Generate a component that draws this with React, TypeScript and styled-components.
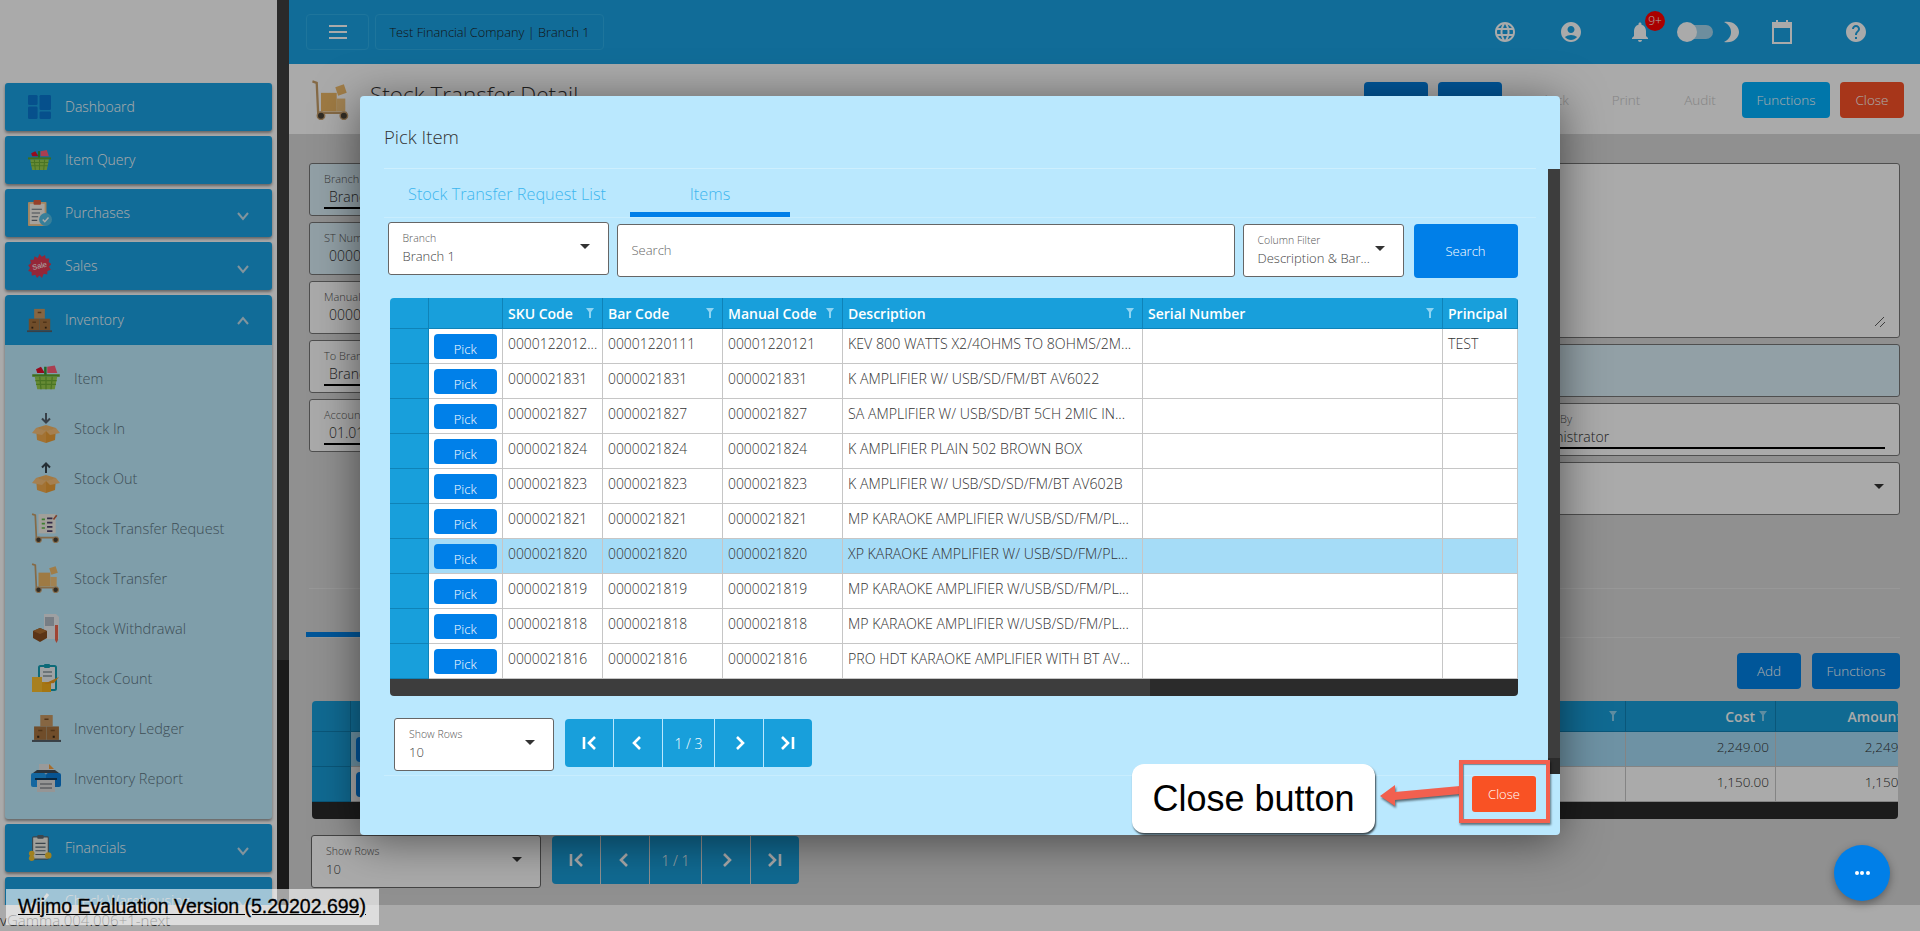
import React from "react";
import styled, { createGlobalStyle } from "styled-components";
import { MdAccountCircle, MdHelp, MdLanguage, MdNotifications } from "react-icons/md";

const Global = createGlobalStyle`
    html, body { margin: 0; padding: 0; width: 100%; height: 100%; overflow: hidden; }
    body { background: #fff; font-family: "Open Sans", "Liberation Sans", sans-serif; font-weight: 300; color: #333; }
    * { box-sizing: border-box; }
`;

/* ---------- icons ---------- */
const Basket = ({ size = 24 }: { size?: number }) => (
    <svg width={size} height={size} viewBox="0 0 24 24">
        <path d="M4 5l4-2 3 5H5z" fill="#e0102c" />
        <path d="M13 3l6-1 2 6h-8z" fill="#ff5d7a" />
        <path d="M10.500 3h2v7h-2z" fill="#2f9a3b" />
        <path d="M1 9h22v2H1z" fill="#5fa52b" />
        <path d="M3 11h18l-2 10H5z" fill="#9ad04f" />
        <path d="M3.500 14h17M4 17h16M7 11l1 10M12 11v10M17 11l-1 10" stroke="#6fae36" strokeWidth="1" fill="none" />
    </svg>
);

const Tiles = () => (
    <svg width={23} height={24} viewBox="0 0 24 29" preserveAspectRatio="none">
        <rect x="0" y="0" width="10" height="12" rx="1.500" fill="#0a78d2" />
        <rect x="0" y="14" width="10" height="15" rx="1.500" fill="#0a78d2" />
        <rect x="12" y="0" width="12" height="18" rx="1.500" fill="#0a78d2" />
        <rect x="12" y="20" width="12" height="9" rx="1.500" fill="#0a78d2" />
    </svg>
);

const Clipboard = () => (
    <svg width={24} height={26} viewBox="0 0 26 28">
        <rect x="0" y="2" width="20" height="26" rx="1" fill="#f3c892" />
        <rect x="2" y="4" width="16" height="22" fill="#f8f4ec" />
        <rect x="6" y="0" width="8" height="5" rx="1" fill="#e0603f" />
        <path d="M4 10h11M4 14h9M4 18h7M4 22h6" stroke="#66707a" strokeWidth="1.200" />
        <circle cx="19" cy="21" r="7" fill="#53bfe8" />
        <path d="M16 21l2.200 2.400 4-4.400" stroke="#fff" strokeWidth="1.600" fill="none" />
    </svg>
);

const SaleBadge = () => (
    <svg width={23} height={24} viewBox="0 0 24 26">
        <path d="M12 0l2.500 3 3.500-1.800.8 3.800 3.900-.1-.8 3.900 3 2.200-2.600 2.800 2 3.300-3.700 1.200-.2 3.900-3.800-.9L14.700 26 12 23.200 9.300 26l-1.900-3.400-3.800.9-.2-3.900L-.3 18.400l2-3.300L-.3 12.300l3-2.200L1.900 6.200l3.900.1.800-3.800 3.500 1.800z" fill="#e03a54" />
        <text x="12" y="15.500" textAnchor="middle" fontSize="8" fill="#fff" transform="rotate(-14 12 13)" fontFamily="Liberation Sans, sans-serif">Sale</text>
    </svg>
);

const Boxes = ({ size = 28 }: { size?: number }) => (
    <svg width={size} height={size} viewBox="0 0 28 28">
        <rect x="8" y="1" width="12" height="11" fill="#c99a64" />
        <rect x="2" y="12" width="12" height="13" fill="#a8743f" />
        <rect x="14" y="12" width="12" height="13" fill="#a8743f" />
        <path d="M12 5h4M6 16h4M18 16h4" stroke="#7a4f25" strokeWidth="1.500" />
        <rect x="5" y="21" width="2" height="2" fill="#3a2a18" />
        <rect x="20" y="21" width="2" height="2" fill="#3a2a18" />
        <rect x="0" y="25" width="28" height="2" fill="#56606a" />
    </svg>
);

const OpenBox = ({ dir }: { dir: "in" | "out" }) => (
    <svg width={28} height={32} viewBox="0 0 28 32">
        {dir === "in" ? (
            <path d="M14 1v9M10 6.500l4 4 4-4" stroke="#54616c" strokeWidth="2" fill="none" />
        ) : (
            <path d="M14 11V2M10 5.500l4-4 4 4" stroke="#37454f" strokeWidth="2" fill="none" />
        )}
        <path d="M14 13l10 3-10 3-10-3z" fill="#f7b764" />
        <path d="M4 16l10 3v12l-9-3z" fill="#f4ab4d" />
        <path d="M24 16l-10 3v12l9-3z" fill="#eda037" />
        <path d="M4 16L0 21l10 2 4-4zM24 16l4 5-10 2-4-4z" fill="#f9c179" />
    </svg>
);

const Cart = ({ size = 28, list }: { size?: number; list?: boolean }) => (
    <svg width={size} height={size} viewBox="0 0 28 28">
        <path d="M1 1l3 1 1 21h20" stroke="#c89f6a" strokeWidth="1.600" fill="none" />
        {list ? (
            <>
                <rect x="7" y="1" width="16" height="18" fill="#f4f1e8" />
                <path d="M10 6h3M10 10h3M10 14h3" stroke="#5fbf4a" strokeWidth="1.600" />
                <path d="M15 5h5M15 9h5M15 13h5M15 17h5" stroke="#4b3f6a" strokeWidth="1.600" />
                <path d="M24 2l-3 4" stroke="#c0603f" strokeWidth="1.500" />
            </>
        ) : (
            <>
                <rect x="7" y="9" width="11" height="13" fill="#eeb765" />
                <rect x="18" y="13" width="6" height="9" fill="#f2c47c" />
                <path d="M17 5l6-2 2 6-6 2z" fill="#f0bc6c" />
            </>
        )}
        <circle cx="7" cy="25" r="2.600" fill="#4a4236" stroke="#c9a271" strokeWidth="1" />
        <circle cx="23" cy="25" r="2.600" fill="#4a4236" stroke="#c9a271" strokeWidth="1" />
    </svg>
);

const Withdrawal = () => (
    <svg width={28} height={30} viewBox="0 0 28 30">
        <path d="M12 1h12l3 3v22H12z" fill="#eef1f4" />
        <path d="M13 4h9v9h-9z" fill="#b3bcc6" />
        <path d="M23 12h3v15l-1.500 3-1.500-3z" fill="#f0664f" />
        <path d="M1 18l7-3 7 3v7l-7 4-7-4z" fill="#8a4f22" />
        <path d="M1 18l7 3 7-3-7-3z" fill="#b06f34" />
    </svg>
);

const CountIcon = () => (
    <svg width={28} height={28} viewBox="0 0 28 28">
        <rect x="7" y="2" width="17" height="24" rx="1.500" fill="#eef4f6" stroke="#12a0b4" strokeWidth="2" />
        <rect x="12" y="0" width="6" height="4" rx="1" fill="#12a0b4" />
        <path d="M11 8h9M11 12h9" stroke="#8b97a0" strokeWidth="1.500" />
        <rect x="0" y="13" width="10" height="15" fill="#fdc02f" />
        <rect x="10" y="18" width="9" height="10" fill="#f8b21c" />
        <path d="M12 20l15-7-5 6z" fill="#f19a1d" />
    </svg>
);

const Printer = () => (
    <svg width={30} height={28} viewBox="0 0 30 28">
        <path d="M8 0h10l5 5v8H8z" fill="#e7e7e7" />
        <path d="M18 0l5 5h-5z" fill="#f5a341" />
        <path d="M2 9l4-3h18l4 3z" fill="#3f4d59" />
        <rect x="0" y="9" width="15" height="14" rx="2" fill="#1f9bf0" />
        <rect x="15" y="9" width="15" height="14" rx="2" fill="#0b7fdc" />
        <rect x="4" y="14" width="22" height="2" fill="#0f3c60" />
        <rect x="6" y="16" width="18" height="12" fill="#e0e0e0" />
        <path d="M9 20h12M9 24h12" stroke="#8a8f94" strokeWidth="1.500" />
    </svg>
);

const Ledger = () => (
    <svg width={24} height={26} viewBox="0 0 26 28">
        <rect x="5" y="2" width="17" height="24" rx="1" fill="#f2f2ea" stroke="#5a6a74" strokeWidth="1.200" />
        <rect x="10" y="0" width="7" height="4" rx="1" fill="#5a6a74" />
        <path d="M8 9h11M8 13h11M8 17h11M8 21h11" stroke="#5a6a74" strokeWidth="1.200" />
        <circle cx="4" cy="20" r="3" fill="#f1c232" />
        <circle cx="4" cy="25" r="3" fill="#f1c232" />
        <circle cx="22" cy="22" r="3.500" fill="#f1c232" />
    </svg>
);

const Warehouse = () => (
    <svg width={24} height={24} viewBox="0 0 24 24">
        <path d="M4 14l5 5L20 5" stroke="#fff" strokeWidth="3" fill="none" />
    </svg>
);

const Chevron = ({ up }: { up?: boolean }) => (
    <svg width={12} height={9} viewBox="0 0 12 9">
        <path d={up ? "M1 8l5-6 5 6" : "M1 1l5 6 5-6"} stroke="#c4dfec" strokeWidth="2" fill="none" />
    </svg>
);

const Funnel = () => (
    <svg width={8} height={10} viewBox="0 0 8 10">
        <path d="M0 0h8L5 4v6H3V4z" fill="#8ed4f2" />
    </svg>
);

const PageGlyph = ({ kind }: { kind: "first" | "prev" | "next" | "last" }) => {
    const d = {
        first: "M3 2v12M14 2L8 8l6 6",
        prev: "M10 2L4 8l6 6",
        next: "M6 2l6 6-6 6",
        last: "M13 2v12M2 2l6 6-6 6",
    }[kind];
    return (
        <svg width={16} height={16} viewBox="0 0 16 16">
            <path d={d} stroke="#fff" strokeWidth="2.600" fill="none" />
        </svg>
    );
};

/* ---------- page frame ---------- */
const Page = styled.div`
    width: 1920px;
    height: 931px;
    display: flex;
    flex-direction: column;
    overflow: hidden;
    position: relative;
`;

const Body = styled.div`
    flex: 0 0 905px;
    display: flex;
    min-height: 0;
`;

const Footer = styled.div`
    flex: 1;
    background: #fff;
    font-size: 15px;
    line-height: 20px;
    padding-top: 5px;
    color: #222;
`;

const Sidebar = styled.nav`
    width: 277px;
    flex: none;
    padding: 83px 5px 0;
    display: flex;
    flex-direction: column;
    gap: 5px;
    overflow: hidden;
`;

const NavRow = styled.div<{ $open?: boolean }>`
    flex: none;
    height: ${(p) => (p.$open ? 50 : 48)}px;
    background: #1aa3e5;
    border-radius: ${(p) => (p.$open ? "4px 4px 0 0" : "3px")};
    box-shadow: 0 2px 3px rgba(0, 0, 0, 0.4);
    display: flex;
    align-items: center;
    color: #fff;
    font-size: 14px;
    margin-bottom: ${(p) => (p.$open ? -5 : 0)}px;
`;

const NavIcon = styled.span`
    width: 60px;
    flex: none;
    display: flex;
    justify-content: center;
    padding-left: 11px;
    padding-right: 2px;
`;

const NavLabel = styled.span`
    flex: 1;
    padding-bottom: 2px;
`;

const NavArrow = styled.span<{ $up?: boolean }>`
    width: 50px;
    flex: none;
    display: flex;
    padding-left: 15px;
    padding-top: ${(p) => (p.$up ? 0 : 6)}px;
`;

const SubPanel = styled.div`
    flex: none;
    height: 474px;
    padding-top: 8px;
    background: #bfedff;
    border-radius: 0 0 3px 3px;
    box-shadow: 0 2px 3px rgba(0, 0, 0, 0.4);
`;

const SubRow = styled.div`
    height: 50px;
    display: flex;
    align-items: center;
    color: #5c7684;
    font-size: 14.500px;
`;

const SubIcon = styled.span`
    width: 69px;
    flex: none;
    display: flex;
    justify-content: center;
    padding-left: 15px;
    padding-right: 2px;
`;

const ScrollTrack = styled.div`
    width: 12px;
    flex: none;
    display: flex;
    flex-direction: column;
    background: #272727;
`;

const ScrollThumb = styled.div`
    height: 660px;
    background: #3f3f3f;
`;

const Main = styled.main`
    flex: 1;
    min-width: 0;
    display: flex;
    flex-direction: column;
    background: #d9d9d9;
`;

const TopBar = styled.header`
    flex: 0 0 64px;
    background: #1aa3e5;
    display: flex;
    align-items: center;
    padding-left: 17px;
    gap: 6px;
`;

const BarBox = styled.div<{ $w: number }>`
    width: ${(p) => p.$w}px;
    flex: none;
    height: 36px;
    border: 1px solid #2db0ea;
    border-radius: 4px;
    display: flex;
    align-items: center;
    justify-content: center;
    font-size: 12.800px;
    color: #1c1c1c;
`;

const TopIcons = styled.div`
    margin-left: auto;
    padding-right: 52px;
    display: flex;
    align-items: center;
    color: #fff;
`;

const TopSlot = styled.span<{ $ml: number }>`
    margin-left: ${(p) => p.$ml}px;
    display: flex;
    position: relative;
`;

const Badge = styled.span`
    position: absolute;
    left: 17px;
    top: -9px;
    width: 20px;
    height: 20px;
    border-radius: 50%;
    background: #f00;
    color: #fff;
    font-size: 12px;
    line-height: 20px;
    text-align: center;
`;

const Toggle = styled.span`
    width: 36px;
    height: 20px;
    display: flex;
    align-items: center;
    position: relative;
    &::before {
        content: "";
        position: absolute;
        left: 6px;
        right: 0;
        height: 14px;
        border-radius: 7px;
        background: #a5d6ee;
    }
    &::after {
        content: "";
        position: absolute;
        left: 0;
        width: 20px;
        height: 20px;
        border-radius: 50%;
        background: #fff;
    }
`;

const PageHead = styled.div`
    flex: 0 0 70px;
    background: #fff;
    display: flex;
    align-items: flex-start;
    padding: 16px 16px 0 22px;
`;

const PageTitle = styled.h1`
    margin: 0 0 0 19px;
    font-size: 22.500px;
    line-height: 30px;
    font-weight: 300;
    color: #333;
`;

const HeadActions = styled.div`
    margin-left: auto;
    padding-top: 2px;
    display: flex;
    gap: 10px;
`;

const ActionBtn = styled.button<{ $tone?: "blue" | "sky" | "red" | "off"; $w?: number }>`
    width: ${(p) => p.$w ?? 64}px;
    height: 36px;
    border: 0;
    border-radius: 4px;
    padding: 0;
    font: inherit;
    font-size: 13.500px;
    color: ${(p) => (p.$tone === "off" ? "#c8c8c8" : "#fff")};
    background: ${(p) =>
        p.$tone === "sky" ? "#00b2ff" : p.$tone === "red" ? "#fb5127" : p.$tone === "off" ? "transparent" : "#0081e6"};
`;

const Content = styled.div`
    flex: 1;
    min-height: 0;
    padding: 29px 20px 0;
    display: flex;
    flex-direction: column;
`;

const FormGrid = styled.div`
    flex: 0 0 351px;
    display: flex;
    gap: 11px;
`;

const FormCol = styled.div<{ $w?: number }>`
    ${(p) => (p.$w ? `width: ${p.$w}px; flex: none;` : "flex: 1;")}
    display: flex;
    flex-direction: column;
    gap: 6px;
`;

const FormField = styled.div<{ $tint?: boolean; $h?: number }>`
    height: ${(p) => p.$h ?? 53}px;
    flex: none;
    border: 1px solid #777;
    border-radius: 3px;
    background: ${(p) => (p.$tint ? "#dcf0fa" : "#fff")};
    padding: 7px 14px 0;
    position: relative;
`;

const FieldLabel = styled.div`
    font-size: 11px;
    line-height: 15px;
    color: #555;
`;

const FieldValue = styled.div<{ $line?: boolean }>`
    font-size: 14px;
    line-height: 19px;
    color: #333;
    padding: 1px 0 1px 5px;
    border-bottom: ${(p) => (p.$line ? "2px solid #000" : "0")};
`;

const Resize = styled.svg`
    position: absolute;
    right: 14px;
    bottom: 10px;
`;

const TabRule = styled.div<{ $top: number }>`
    margin-top: ${(p) => p.$top}px;
    height: 1px;
    flex: none;
    background: #e4e4e4;
`;

const TabMark = styled.div`
    flex: none;
    margin: 43px 0 0 -3px;
    width: 180px;
    height: 5px;
    background: #0081e6;
`;

const GridTools = styled.div`
    flex: none;
    margin-top: 15px;
    display: flex;
    justify-content: flex-end;
    gap: 11px;
`;

const Grid = styled.div<{ $cols: string; $w: number; $top?: number; $left?: number }>`
    flex: none;
    width: ${(p) => p.$w}px;
    display: grid;
    grid-template-columns: ${(p) => p.$cols};
    grid-template-rows: 31px;
    grid-auto-rows: 35px;
    margin-top: ${(p) => p.$top ?? 0}px;
    margin-left: ${(p) => p.$left ?? 0}px;
    border-radius: 4px 4px 0 0;
    overflow: hidden;
`;

const HeadCell = styled.div<{ $right?: boolean; $inset?: number }>`
    background: #189fdb;
    border-right: 1px solid #0f83b8;
    border-bottom: 1px solid #0f83b8;
    color: #fff;
    font-size: 14px;
    font-weight: 600;
    display: flex;
    align-items: center;
    justify-content: ${(p) => (p.$right ? "flex-end" : "space-between")};
    gap: 4px;
    padding: 0 ${(p) => p.$inset ?? 8}px 0 5px;
    white-space: nowrap;
    overflow: hidden;
    &:last-child { border-right: 0; }
`;

const RowHead = styled.div`
    background: #189fdb;
    border-right: 1px solid #0f83b8;
    border-bottom: 1px solid #0f83b8;
`;

const Cell = styled.div<{ $on?: boolean; $right?: boolean; $size?: number }>`
    background: ${(p) => (p.$on ? "#a5dcf7" : "#fff")};
    border-right: 1px solid #c6c6c6;
    border-bottom: 1px solid #c6c6c6;
    color: #333;
    font-size: ${(p) => p.$size ?? 13.5}px;
    line-height: 30px;
    padding: 0 6px 0 5px;
    white-space: nowrap;
    overflow: hidden;
    text-align: ${(p) => (p.$right ? "right" : "left")};
`;

const PickCell = styled(Cell)`
    padding: 5px;
    display: flex;
`;

const PickBtn = styled.button`
    width: 64px;
    height: 25px;
    border: 0;
    border-radius: 4px;
    padding: 0;
    background: #0080e9;
    color: #fff;
    font: inherit;
    font-size: 13px;
`;

const HScroll = styled.div<{ $thumb: number; $w: number; $left: number }>`
    flex: none;
    height: 17px;
    width: ${(p) => p.$w}px;
    margin-left: ${(p) => p.$left}px;
    border-radius: 0 0 4px 4px;
    background: linear-gradient(to right, #3d3d3d ${(p) => p.$thumb}px, #2b2b2b ${(p) => p.$thumb}px);
`;

const PagerRow = styled.div<{ $top: number; $left: number }>`
    flex: none;
    display: flex;
    align-items: flex-start;
    gap: 11px;
    margin-top: ${(p) => p.$top}px;
    margin-left: ${(p) => p.$left}px;
`;

const SelectBox = styled.div<{ $w: number; $top?: number }>`
    width: ${(p) => p.$w}px;
    height: 53px;
    flex: none;
    margin-top: ${(p) => p.$top ?? 0}px;
    background: #fff;
    border: 1px solid #666;
    border-radius: 3px;
    padding: 8px 14px 0;
    position: relative;
`;

const SelectLabel = styled.div`
    font-size: 10.500px;
    line-height: 15px;
    color: #555;
`;

const SelectValue = styled.div`
    font-size: 13px;
    line-height: 20px;
    color: #444;
    white-space: nowrap;
`;

const Caret = styled.i<{ $right?: number }>`
    position: absolute;
    right: ${(p) => p.$right ?? 18}px;
    top: 21px;
    border-left: 5px solid transparent;
    border-right: 5px solid transparent;
    border-top: 5px solid #333;
`;

const Pager = styled.div`
    display: flex;
    margin-top: 1px;
    border-radius: 4px;
    overflow: hidden;
    gap: 1px;
`;

const PagerCell = styled.div<{ $w?: number }>`
    width: ${(p) => p.$w ?? 48}px;
    height: 48px;
    background: #189fdb;
    color: #fff;
    font-size: 14px;
    display: flex;
    align-items: center;
    justify-content: center;
`;

/* ---------- modal ---------- */
const Backdrop = styled.div`
    position: absolute;
    inset: 0;
    background: rgba(0, 0, 0, 0.333);
    z-index: 10;
`;

const Modal = styled.section`
    position: absolute;
    left: 360px;
    top: 96px;
    width: 1200px;
    height: 739px;
    background: #bae8fe;
    border-radius: 4px;
    box-shadow: 0 6px 45px rgba(0, 0, 0, 0.5);
    z-index: 11;
    display: flex;
    flex-direction: column;
`;

const ModalHead = styled.div`
    flex: 0 0 73px;
    margin: 0 24px;
    padding-top: 26px;
    border-bottom: 1px solid #cdeffe;
    font-size: 18.500px;
    line-height: 30px;
    color: #333;
`;

const TabBar = styled.div`
    flex: 0 0 48px;
    margin: 0 24px;
    display: flex;
    border-bottom: 1px solid #c8edfe;
`;

const Tab = styled.div<{ $w: number; $on?: boolean }>`
    width: ${(p) => p.$w}px;
    height: 48px;
    text-align: center;
    font-size: 16.300px;
    line-height: 50px;
    color: #3db6ee;
    border-bottom: ${(p) => (p.$on ? "5px solid #007fe8" : "0")};
`;

const FilterRow = styled.div`
    flex: none;
    margin: 4px 0 0 27.500px;
    display: flex;
    align-items: flex-start;
    gap: 8px;
`;

const SearchBox = styled.div`
    width: 618px;
    height: 53px;
    margin-top: 2px;
    background: #fff;
    border: 1px solid #666;
    border-radius: 3px;
    padding-left: 14px;
    font-size: 13px;
    line-height: 50px;
    color: #666;
`;

const SearchBtn = styled.button`
    width: 104px;
    height: 54px;
    margin: 2px 0 0 2px;
    border: 0;
    border-radius: 4px;
    background: #007fe8;
    color: #fff;
    font: inherit;
    font-size: 13px;
`;

const ModalFoot = styled.div`
    margin: 4px 24px 0;
    flex: 1;
    border-top: 1px solid #c8edfe;
    display: flex;
    justify-content: flex-end;
    align-items: flex-start;
`;

const CloseBtn = styled.button`
    width: 64px;
    height: 36px;
    border: 0;
    border-radius: 3px;
    padding: 0;
    background: #f95224;
    color: #fff;
    font: inherit;
    font-size: 13px;
`;

const ModalScroll = styled.div`
    position: absolute;
    left: 1188px;
    top: 73px;
    width: 12px;
    height: 605px;
    background: linear-gradient(to bottom, #3d3d3d 589px, #2b2b2b 589px);
`;

const RedBox = styled.div`
    position: absolute;
    left: 1099px;
    top: 664px;
    width: 91px;
    height: 63px;
    border: 4px solid #f2604f;
    box-shadow: 1px 2px 2px rgba(0, 0, 0, 0.5), inset 1px 1px 1px rgba(0, 0, 0, 0.4);
    z-index: 2;
`;

const Callout = styled.div`
    position: absolute;
    left: 772px;
    top: 668px;
    width: 243px;
    height: 69px;
    border-radius: 12px;
    background: #fff;
    box-shadow: 1px 2px 2px rgba(0, 0, 0, 0.7);
    color: #000;
    font-family: "Liberation Sans", Arial, sans-serif;
    font-weight: 400;
    font-size: 36px;
    line-height: 69px;
    text-align: center;
`;

const CalloutArrow = styled.svg`
    position: absolute;
    left: 1017px;
    top: 678px;
    filter: drop-shadow(1px 2px 1px rgba(0, 0, 0, 0.55));
`;

const Fab = styled.button`
    position: absolute;
    left: 1834px;
    top: 845px;
    width: 56px;
    height: 56px;
    border: 0;
    border-radius: 50%;
    background: #007fe8;
    box-shadow: 0 3px 8px rgba(0, 0, 0, 0.35);
    z-index: 12;
    display: flex;
    align-items: center;
    justify-content: center;
    gap: 1.500px;
    padding: 0;
`;

const FabDot = styled.i`
    width: 4px;
    height: 4px;
    border-radius: 50%;
    background: #fff;
`;

const Watermark = styled.div`
    position: absolute;
    left: 6px;
    top: 889px;
    width: 373px;
    height: 36px;
    background: rgba(255, 255, 255, 0.6);
    z-index: 20;
    padding-left: 12px;
    font-family: "Liberation Sans", Arial, sans-serif;
    font-weight: 400;
    font-size: 19.500px;
    line-height: 35px;
    color: #000;
    text-decoration: underline;
    -webkit-text-stroke: 0.3px #000;
    white-space: nowrap;
`;

/* ---------- data ---------- */
const pickRows = [
    ["0000122012...", "00001220111", "00001220121", "KEV 800 WATTS X2/4OHMS TO 8OHMS/2M...", "", "TEST"],
    ["0000021831", "0000021831", "0000021831", "K AMPLIFIER W/ USB/SD/FM/BT AV6022", "", ""],
    ["0000021827", "0000021827", "0000021827", "SA AMPLIFIER W/ USB/SD/BT 5CH 2MIC IN...", "", ""],
    ["0000021824", "0000021824", "0000021824", "K AMPLIFIER PLAIN 502 BROWN BOX", "", ""],
    ["0000021823", "0000021823", "0000021823", "K AMPLIFIER W/ USB/SD/SD/FM/BT AV602B", "", ""],
    ["0000021821", "0000021821", "0000021821", "MP KARAOKE AMPLIFIER W/USB/SD/FM/PL...", "", ""],
    ["0000021820", "0000021820", "0000021820", "XP KARAOKE AMPLIFIER W/ USB/SD/FM/PL...", "", ""],
    ["0000021819", "0000021819", "0000021819", "MP KARAOKE AMPLIFIER W/USB/SD/FM/PL...", "", ""],
    ["0000021818", "0000021818", "0000021818", "MP KARAOKE AMPLIFIER W/USB/SD/FM/PL...", "", ""],
    ["0000021816", "0000021816", "0000021816", "PRO HDT KARAOKE AMPLIFIER WITH BT AV...", "", ""],
];

const pickColumns = ["SKU Code", "Bar Code", "Manual Code", "Description", "Serial Number"];

const navTop = [
    { label: "Dashboard", icon: <Tiles /> },
    { label: "Item Query", icon: <Basket size={25} /> },
    { label: "Purchases", icon: <Clipboard />, arrow: true },
    { label: "Sales", icon: <SaleBadge />, arrow: true },
];

const subItems = [
    { label: "Item", icon: <Basket size={30} /> },
    { label: "Stock In", icon: <OpenBox dir="in" /> },
    { label: "Stock Out", icon: <OpenBox dir="out" /> },
    { label: "Stock Transfer Request", icon: <Cart size={30} list /> },
    { label: "Stock Transfer", icon: <Cart size={30} /> },
    { label: "Stock Withdrawal", icon: <Withdrawal /> },
    { label: "Stock Count", icon: <CountIcon /> },
    { label: "Inventory Ledger", icon: <Boxes size={29} /> },
    { label: "Inventory Report", icon: <Printer /> },
];

const Pagination = ({ label }: { label: string }) => (
    <Pager>
        <PagerCell><PageGlyph kind="first" /></PagerCell>
        <PagerCell><PageGlyph kind="prev" /></PagerCell>
        <PagerCell $w={51}>{label}</PagerCell>
        <PagerCell><PageGlyph kind="next" /></PagerCell>
        <PagerCell><PageGlyph kind="last" /></PagerCell>
    </Pager>
);

const Select = ({ label, value, w, top }: { label: string; value: string; w: number; top?: number }) => (
    <SelectBox $w={w} $top={top}>
        <SelectLabel>{label}</SelectLabel>
        <SelectValue>{value}</SelectValue>
        <Caret />
    </SelectBox>
);

export default function App() {
    return (
        <>
            <Global />
            <Page>
                <Body>
                    <Sidebar>
                        {navTop.map((n) => (
                            <NavRow key={n.label}>
                                <NavIcon>{n.icon}</NavIcon>
                                <NavLabel>{n.label}</NavLabel>
                                {n.arrow && <NavArrow><Chevron /></NavArrow>}
                            </NavRow>
                        ))}
                        <NavRow $open>
                            <NavIcon><Boxes size={25} /></NavIcon>
                            <NavLabel>Inventory</NavLabel>
                            <NavArrow $up><Chevron up /></NavArrow>
                        </NavRow>
                        <SubPanel>
                            {subItems.map((s) => (
                                <SubRow key={s.label}>
                                    <SubIcon>{s.icon}</SubIcon>
                                    {s.label}
                                </SubRow>
                            ))}
                        </SubPanel>
                        <NavRow>
                            <NavIcon><Ledger /></NavIcon>
                            <NavLabel>Financials</NavLabel>
                            <NavArrow><Chevron /></NavArrow>
                        </NavRow>
                        <NavRow>
                            <NavIcon><Warehouse /></NavIcon>
                            <NavLabel>Check Warehousing</NavLabel>
                            <NavArrow><Chevron /></NavArrow>
                        </NavRow>
                    </Sidebar>
                    <ScrollTrack><ScrollThumb /></ScrollTrack>
                    <Main>
                        <TopBar>
                            <BarBox $w={63}>
                                <svg width={20} height={16} viewBox="0 0 20 16">
                                    <path d="M1 2h18M1 8h18M1 14h18" stroke="#fff" strokeWidth="2" />
                                </svg>
                            </BarBox>
                            <BarBox $w={229}>Test Financial Company | Branch 1</BarBox>
                            <TopIcons>
                                <TopSlot $ml={0}><MdLanguage size={24} /></TopSlot>
                                <TopSlot $ml={42}><MdAccountCircle size={24} /></TopSlot>
                                <TopSlot $ml={45}>
                                    <MdNotifications size={24} />
                                    <Badge>9+</Badge>
                                </TopSlot>
                                <TopSlot $ml={25}><Toggle /></TopSlot>
                                <TopSlot $ml={10}>
                                    <svg width={16} height={22} viewBox="0 0 16 22">
                                        <path d="M1 1c9-1.500 15 4 15 10s-6 11.500-15 10c5-2.500 7-6 7-10S6 3.500 1 1z" fill="currentColor" />
                                    </svg>
                                </TopSlot>
                                <TopSlot $ml={33}>
                                    <svg width={20} height={24} viewBox="0 0 20 24">
                                        <path d="M1 3h18v20H1z" fill="none" stroke="currentColor" strokeWidth="2" />
                                        <path d="M1 3h18v5H1zM4 0h2v4H4zM14 0h2v4h-2z" fill="currentColor" />
                                    </svg>
                                </TopSlot>
                                <TopSlot $ml={52}><MdHelp size={24} /></TopSlot>
                            </TopIcons>
                        </TopBar>
                        <PageHead>
                            <Cart size={40} />
                            <PageTitle>Stock Transfer Detail</PageTitle>
                            <HeadActions>
                                <ActionBtn>Save</ActionBtn>
                                <ActionBtn>Post</ActionBtn>
                                <ActionBtn $tone="off" $w={72}>Unlock</ActionBtn>
                                <ActionBtn $tone="off">Print</ActionBtn>
                                <ActionBtn $tone="off">Audit</ActionBtn>
                                <ActionBtn $tone="sky" $w={88}>Functions</ActionBtn>
                                <ActionBtn $tone="red">Close</ActionBtn>
                            </HeadActions>
                        </PageHead>
                        <Content>
                            <FormGrid>
                                <FormCol>
                                    <FormField $tint>
                                        <FieldLabel>Branch</FieldLabel>
                                        <FieldValue $line>Branch 1</FieldValue>
                                    </FormField>
                                    <FormField $tint>
                                        <FieldLabel>ST Number</FieldLabel>
                                        <FieldValue>0000000001</FieldValue>
                                    </FormField>
                                    <FormField>
                                        <FieldLabel>Manual Code</FieldLabel>
                                        <FieldValue>0000000001</FieldValue>
                                    </FormField>
                                    <FormField>
                                        <FieldLabel>To Branch</FieldLabel>
                                        <FieldValue $line>Branch 2</FieldValue>
                                    </FormField>
                                    <FormField>
                                        <FieldLabel>Account</FieldLabel>
                                        <FieldValue $line>01.01</FieldValue>
                                    </FormField>
                                </FormCol>
                                <FormCol $w={397}>
                                    <FormField $h={175}>
                                        <Resize width={10} height={10} viewBox="0 0 10 10">
                                            <path d="M0 9l9-9M5 10l5-5" stroke="#333" strokeWidth="0.800" />
                                        </Resize>
                                    </FormField>
                                    <FormField $tint />
                                    <FormField>
                                        <FieldLabel>Created By</FieldLabel>
                                        <FieldValue $line>Administrator</FieldValue>
                                    </FormField>
                                    <FormField>
                                        <Caret $right={15} />
                                    </FormField>
                                </FormCol>
                            </FormGrid>
                            <TabRule $top={73} />
                            <TabMark />
                            <TabRule $top={0} />
                            <GridTools>
                                <ActionBtn>Add</ActionBtn>
                                <ActionBtn $w={88}>Functions</ActionBtn>
                            </GridTools>
                            <Grid $cols="39px 75px 1200px 150px 148px" $w={1586} $top={12} $left={3}>
                                <HeadCell />
                                <HeadCell />
                                <HeadCell $right><Funnel /></HeadCell>
                                <HeadCell $right>Cost <Funnel /></HeadCell>
                                <HeadCell $right $inset={9}>Amount <Funnel /></HeadCell>
                                {["2,249.00", "1,150.00"].map((v, i) => (
                                    <React.Fragment key={v}>
                                        <RowHead />
                                        <PickCell $on={i === 0}><PickBtn>Pick</PickBtn></PickCell>
                                        <Cell $on={i === 0} />
                                        <Cell $on={i === 0} $right>{v}</Cell>
                                        <Cell $on={i === 0} $right>{v}</Cell>
                                    </React.Fragment>
                                ))}
                            </Grid>
                            <HScroll $thumb={0} $w={1586} $left={3} />
                            <PagerRow $top={16} $left={2}>
                                <Select label="Show Rows" value="10" w={230} />
                                <Pagination label="1 / 1" />
                            </PagerRow>
                        </Content>
                    </Main>
                </Body>
                <Footer>vGamma.004.006+1-next</Footer>

                <Backdrop />
                <Modal>
                    <ModalHead>Pick Item</ModalHead>
                    <TabBar>
                        <Tab $w={246}>Stock Transfer Request List</Tab>
                        <Tab $w={160} $on>Items</Tab>
                    </TabBar>
                    <FilterRow>
                        <Select label="Branch" value="Branch 1" w={221} />
                        <SearchBox>Search</SearchBox>
                        <Select label="Column Filter" value="Description & Bar..." w={161} top={2} />
                        <SearchBtn>Search</SearchBtn>
                    </FilterRow>
                    <Grid $cols="38.500px 74.500px 100px 120px 120px 300px 300px 75px" $w={1128} $top={20} $left={30}>
                        <HeadCell />
                        <HeadCell />
                        {pickColumns.map((c) => (
                            <HeadCell key={c}>{c} <Funnel /></HeadCell>
                        ))}
                        <HeadCell>Principal</HeadCell>
                        {pickRows.map((r, i) => (
                            <React.Fragment key={i}>
                                <RowHead />
                                <PickCell $on={i === 6}><PickBtn>Pick</PickBtn></PickCell>
                                {r.map((v, j) => (
                                    <Cell key={j} $on={i === 6} $size={j < 3 ? 13.9 : 14.2}>{v}</Cell>
                                ))}
                            </React.Fragment>
                        ))}
                    </Grid>
                    <HScroll $thumb={760} $w={1128} $left={30} />
                    <PagerRow $top={22} $left={34}>
                        <Select label="Show Rows" value="10" w={160} />
                        <Pagination label="1 / 3" />
                    </PagerRow>
                    <ModalFoot>
                        <CloseBtn>Close</CloseBtn>
                    </ModalFoot>
                    <ModalScroll />
                    <Callout>Close button</Callout>
                    <CalloutArrow width={84} height={36} viewBox="0 0 84 36">
                        <path d="M3 22L18 11v7l65-6v8l-65 6v6z" fill="#f2604f" />
                    </CalloutArrow>
                    <RedBox />
                </Modal>
                <Fab>
                    <FabDot />
                    <FabDot />
                    <FabDot />
                </Fab>
                <Watermark>Wijmo Evaluation Version (5.20202.699)</Watermark>
            </Page>
        </>
    );
}
